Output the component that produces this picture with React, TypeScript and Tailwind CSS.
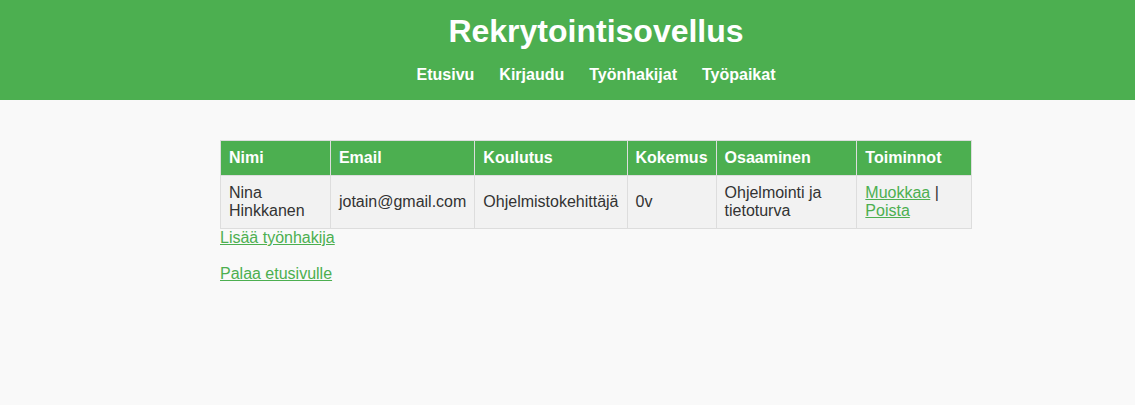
const navItems = ["Etusivu", "Kirjaudu", "Työnhakijat", "Työpaikat"];

const columns = ["Nimi", "Email", "Koulutus", "Kokemus", "Osaaminen", "Toiminnot"];

const applicants = [
  {
    name: "Nina Hinkkanen",
    email: "jotain@gmail.com",
    education: "Ohjelmistokehittäjä",
    experience: "0v",
    skills: "Ohjelmointi ja tietoturva",
  },
];

const linkClass = "text-[#4caf50] underline";
const cellClass = "border border-[#dddddd] p-2 text-left";

export default function App() {
  return (
    <div className="min-h-screen bg-[#f9f9f9] font-['Liberation_Sans',Arial,sans-serif] text-base leading-[18px] text-[#333333]">
      <header className="bg-[#4caf50] pt-[13px] pb-4 pl-[57px] text-center text-white">
        <h1 className="text-[32px] leading-[37px] font-bold">Rekrytointisovellus</h1>
        <nav className="mt-4 flex justify-center gap-[25px] font-bold">
          {navItems.map((item) => (
            <a key={item} href="#">
              {item}
            </a>
          ))}
        </nav>
      </header>
      <div className="pl-[57px]">
        <main className="mx-auto max-w-[752px] pt-10">
          <table className="w-full border-collapse">
            <thead>
              <tr className="bg-[#4caf50] text-white">
                {columns.map((column) => (
                  <th key={column} scope="col" className={cellClass}>
                    {column}
                  </th>
                ))}
              </tr>
            </thead>
            <tbody>
              {applicants.map((person) => (
                <tr key={person.email} className="bg-[#f2f2f2]">
                  <td className={cellClass}>{person.name}</td>
                  <td className={cellClass}>{person.email}</td>
                  <td className={cellClass}>{person.education}</td>
                  <td className={cellClass}>{person.experience}</td>
                  <td className={cellClass}>{person.skills}</td>
                  <td className={cellClass}>
                    <a href="#" className={linkClass}>Muokkaa</a> |{" "}
                    <a href="#" className={linkClass}>Poista</a>
                  </td>
                </tr>
              ))}
            </tbody>
          </table>
          <div className="flex flex-col items-start gap-[18px]">
            <a href="#" className={linkClass}>Lisää työnhakija</a>
            <a href="#" className={linkClass}>Palaa etusivulle</a>
          </div>
        </main>
      </div>
    </div>
  );
}
